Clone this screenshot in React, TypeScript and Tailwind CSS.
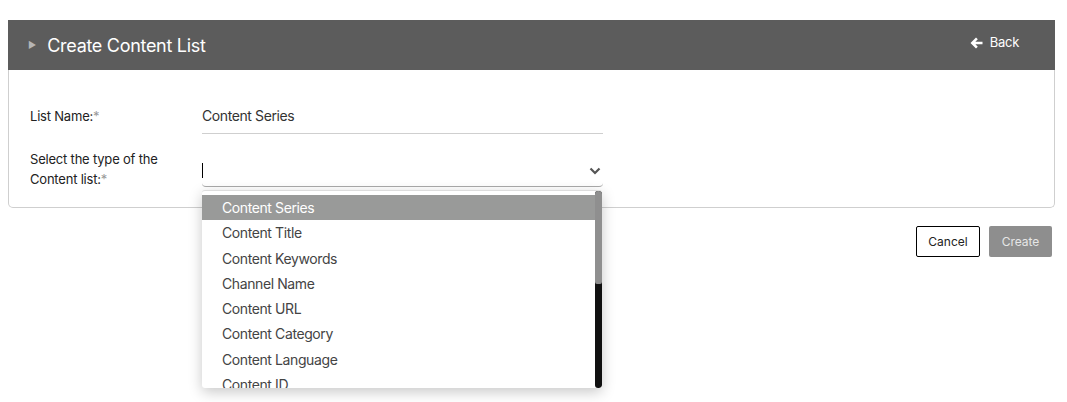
const options = [
  'Content Series',
  'Content Title',
  'Content Keywords',
  'Channel Name',
  'Content URL',
  'Content Category',
  'Content Language',
  'Content ID',
]

export default function App() {
  return (
    <div className="min-h-screen bg-white pt-5 pl-2 pr-3 text-[#222]" style={{ fontFamily: 'Inter, "Liberation Sans", sans-serif' }}>
      <header className="flex h-[50px] items-center justify-between bg-[#5c5c5c] pl-[20px] pr-[36px]">
        <div className="flex items-center gap-[11px]">
          <span className="text-[9px] text-[#b5b5b5]">▶</span>
          <h1 className="text-[18px] tracking-[-0.3px] text-white">Create Content List</h1>
        </div>
        <button type="button" className="-mt-[4px] flex items-center gap-[7px] text-[13px] tracking-[-0.3px] text-white">
          <svg width="13" height="12" viewBox="0 0 13 12" aria-hidden>
            <path d="M6 0.5 L0.5 6 L6 11.5 L7.8 9.7 L5.4 7.3 H12.5 V4.7 H5.4 L7.8 2.3 Z" fill="white" />
          </svg>
          Back
        </button>
      </header>

      <div className="rounded-b-[5px] border border-t-0 border-[#cfcfcf] pl-[21px] pb-[18px] pt-[35px]">
        <div className="flex items-start">
          <label className="w-[172px] pt-[1px] text-[13px] leading-[20px] tracking-[-0.2px]">
            List Name:<span className="text-[#999]">*</span>
          </label>
          <div className="w-[401px] border-b border-[#cfcfcf] pb-[6px] text-[14px] leading-[22px] tracking-[-0.4px] text-[#333]">
            Content Series
          </div>
        </div>

        <div className="mt-[15px] flex items-start">
          <label className="w-[172px] text-[13px] leading-[20px] tracking-[-0.2px]">
            Select the type of the
            <br />
            Content list:<span className="text-[#999]">*</span>
          </label>
          <div className="relative w-[401px]">
            <div className="flex h-[38px] items-center justify-between rounded-b-[4px] border-b border-[#aaa] pt-[6px]">
              <span className="h-[15px] w-px bg-black" />
              <svg width="12" height="8" viewBox="0 0 12 8" className="mr-[2px]" aria-hidden>
                <path d="M1.5 1.5 L6 6 L10.5 1.5" fill="none" stroke="#555" strokeWidth="2.2" />
              </svg>
            </div>
            <div className="absolute left-0 top-[41px] z-10 h-[198px] w-[400px] overflow-hidden rounded-[3px] border-t border-[#ddd] bg-white shadow-[0_4px_14px_rgba(0,0,0,0.22)]">
              <ul className="pt-[4px] pr-[7px]">
                {options.map((o, i) => (
                  <li
                    key={o}
                    className={`h-[25.3px] pl-[20px] text-[14px] leading-[25px] tracking-[-0.4px] ${i === 0 ? 'bg-[#999a99] text-white' : 'text-[#444]'}`}
                  >
                    {o}
                  </li>
                ))}
              </ul>
              <div className="absolute right-0 top-0 flex h-full w-[7px] flex-col overflow-hidden rounded-[3px] bg-[#111]">
                <div className="h-[93px] rounded-b-[2px] bg-[#8f8f8f]" />
              </div>
            </div>
          </div>
        </div>
      </div>

      <div className="mt-[18px] flex justify-end gap-[9px] pr-[3px]">
        <button type="button" className="h-[31px] w-[64px] rounded-[2px] border border-black bg-white text-[12px] text-[#222]">
          Cancel
        </button>
        <button type="button" className="h-[31px] w-[63px] rounded-[2px] bg-[#8e8e8e] text-[12px] text-[#e6e6e6]">
          Create
        </button>
      </div>
    </div>
  )
}
